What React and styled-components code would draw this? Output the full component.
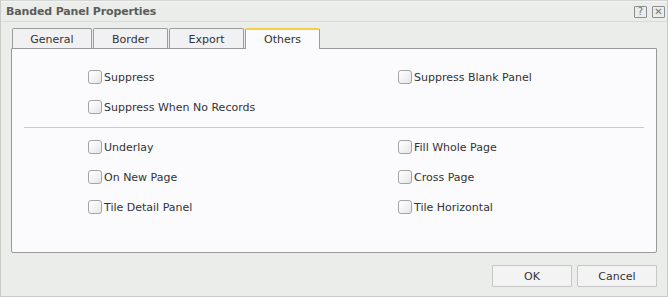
import React from 'react'
import styled, { createGlobalStyle } from 'styled-components'

const GlobalStyle = createGlobalStyle`
  html, body {
    margin: 0;
    padding: 0;
    background: #ffffff;
  }
  body {
    font-family: "DejaVu Sans", Verdana, sans-serif;
  }
`

const Dialog = styled.div`
  box-sizing: border-box;
  width: 668px;
  height: 297px;
  margin: 0;
  border: 1px solid #c9cbc8;
  border-top-color: #d4d6d3;
  background: #ebedea;
  display: flex;
  flex-direction: column;
`

const TitleBar = styled.div`
  height: 19px;
  display: flex;
  align-items: center;
  padding: 0 2px 0 5px;
  border-bottom: 1px solid #d9dcd8;
  border-top: 1px solid #f4f5f3;
`

const Title = styled.div`
  flex: 1;
  font-size: 11px;
  font-weight: bold;
  color: #5b5d5b;
  letter-spacing: -0.15px;
`

const IconBox = styled.span`
  box-sizing: border-box;
  width: 13px;
  height: 12px;
  margin-left: 5px;
  border: 1px solid #8e8e8e;
  border-radius: 1px;
  display: flex;
  align-items: center;
  justify-content: center;
  font-size: 10px;
  line-height: 1;
  color: #777;
`

const Body = styled.div`
  flex: 1;
  padding: 6px 10px 0 10px;
  display: flex;
  flex-direction: column;
`

const TabStrip = styled.div`
  display: flex;
  padding-left: 1px;
  height: 21px;
  position: relative;
  z-index: 1;
`

const Tab = styled.div`
  box-sizing: border-box;
  width: ${p => p.w}px;
  height: ${p => (p.active ? 21 : 20)}px;
  margin-right: 1px;
  border: 1px solid #9c9c9c;
  border-bottom: none;
  border-top: ${p => (p.active ? '2px solid #f6cf45' : '1px solid #9c9c9c')};
  border-radius: 2px 2px 0 0;
  background: ${p => (p.active ? '#fbfafc' : '#f1f1f3')};
  color: #333;
  font-size: 11px;
  display: flex;
  align-items: center;
  justify-content: center;
  padding-top: ${p => (p.active ? 0 : 1)}px;
`

const Panel = styled.div`
  box-sizing: border-box;
  height: 205px;
  margin-top: -1px;
  border: 1px solid #9a9a9a;
  border-radius: 0 0 2px 2px;
  background: #fbfafc;
  padding-top: 13px;
`

const Grid = styled.div`
  display: grid;
  grid-template-columns: 310px 1fr;
  padding-left: 76px;
`

const Item = styled.label`
  height: 30px;
  display: flex;
  align-items: center;
  font-size: 11px;
  color: #333;
`

const Box = styled.span`
  box-sizing: border-box;
  width: 14px;
  height: 14px;
  margin-right: 2px;
  border: 1px solid #a4a4a4;
  border-radius: 3px;
  background: linear-gradient(135deg, #ffffff 0%, #f1f1f1 60%, #e4e4e4 100%);
`

const Divider = styled.div`
  height: 1px;
  margin: 5px 12px 4px 12px;
  background: #c4cbce;
`

const Footer = styled.div`
  display: flex;
  justify-content: flex-end;
  gap: 5px;
  padding-top: 12px;
`

const Button = styled.button`
  box-sizing: border-box;
  width: 80px;
  height: 22px;
  border: 1px solid #c6c6c6;
  border-radius: 1px;
  background: #f3f3f3;
  color: #333;
  font-family: inherit;
  font-size: 11px;
  padding: 0;
`

const tabs = [
  { label: 'General', w: 80 },
  { label: 'Border', w: 75 },
  { label: 'Export', w: 75 },
  { label: 'Others', w: 75, active: true },
]

const Check = ({ children }) => (
  <Item>
    <Box />
    {children}
  </Item>
)

const App = () => (
  <>
    <GlobalStyle />
    <Dialog>
      <TitleBar>
        <Title>Banded Panel Properties</Title>
        <IconBox>?</IconBox>
        <IconBox>✕</IconBox>
      </TitleBar>
      <Body>
        <TabStrip>
          {tabs.map(t => (
            <Tab key={t.label} w={t.w} active={t.active}>{t.label}</Tab>
          ))}
        </TabStrip>
        <Panel>
          <Grid>
            <Check>Suppress</Check>
            <Check>Suppress Blank Panel</Check>
            <Check>Suppress When No Records</Check>
            <div />
          </Grid>
          <Divider />
          <Grid>
            <Check>Underlay</Check>
            <Check>Fill Whole Page</Check>
            <Check>On New Page</Check>
            <Check>Cross Page</Check>
            <Check>Tile Detail Panel</Check>
            <Check>Tile Horizontal</Check>
          </Grid>
        </Panel>
        <Footer>
          <Button>OK</Button>
          <Button>Cancel</Button>
        </Footer>
      </Body>
    </Dialog>
  </>
)

export default App
